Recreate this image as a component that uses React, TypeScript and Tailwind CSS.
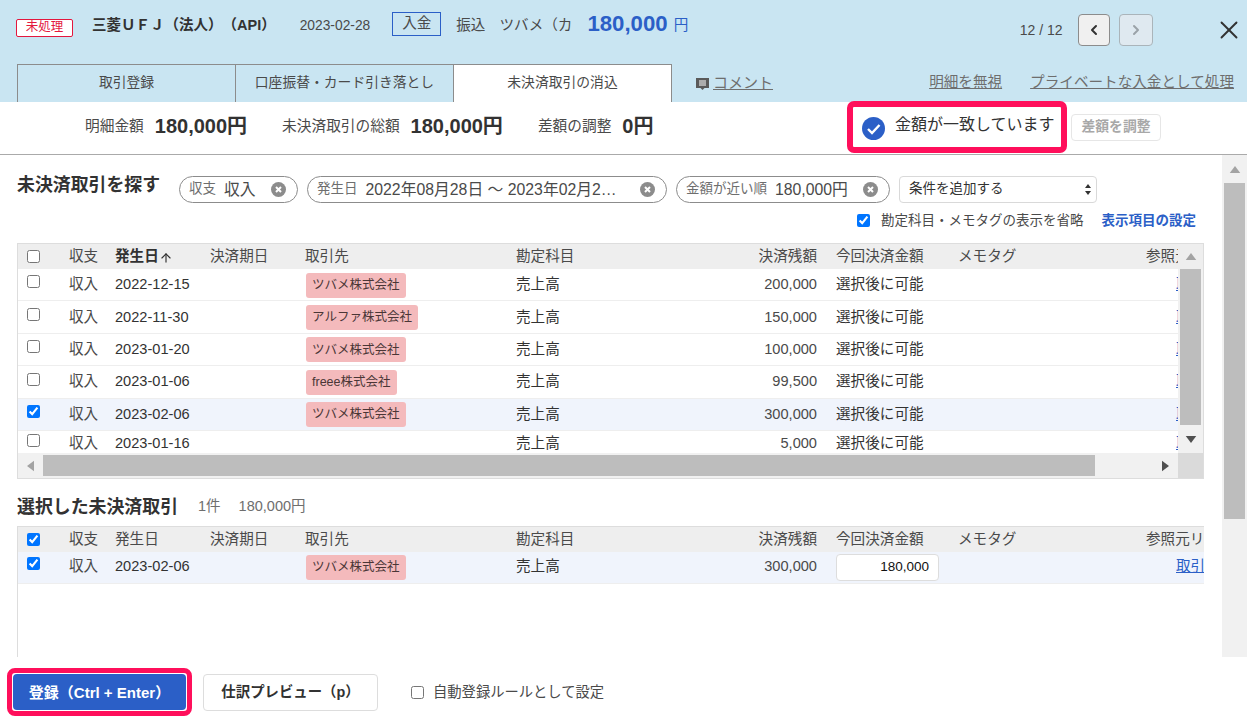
import { ArrowUp, ChevronLeft, ChevronRight, X } from "lucide-react";

const rows = [
  { date: "2022-12-15", partner: "ツバメ株式会社", amount: "200,000" },
  { date: "2022-11-30", partner: "アルファ株式会社", amount: "150,000" },
  { date: "2023-01-20", partner: "ツバメ株式会社", amount: "100,000" },
  { date: "2023-01-06", partner: "freee株式会社", amount: "99,500" },
  { date: "2023-02-06", partner: "ツバメ株式会社", amount: "300,000", checked: true },
  { date: "2023-01-16", partner: "", amount: "5,000", last: true },
];

const gridCols = "grid grid-cols-[51px_46px_95px_95px_211px_150px_170px_122px_188px_1fr] items-center";

const Tag = ({ children }: { children: React.ReactNode }) => (
  <span className="inline-flex h-[25px] items-center rounded-[3px] bg-[#f4babc] px-[6px] text-[12.5px] text-[#4a3636] whitespace-nowrap">
    {children}
  </span>
);

const Tri = ({ dir, className }: { dir: "up" | "down" | "left" | "right"; className: string }) => {
  const points = {
    up: "0,8 6,0 12,8",
    down: "0,0 12,0 6,8",
    left: "8,0 8,12 0,6",
    right: "0,0 0,12 8,6",
  };
  const horizontal = dir === "left" || dir === "right";
  return (
    <svg width={horizontal ? 7 : 12} height={horizontal ? 12 : 7} viewBox={horizontal ? "0 0 8 12" : "0 0 12 8"} className={className}>
      <polygon points={points[dir]} fill="currentColor" />
    </svg>
  );
};

const ClearIcon = () => (
  <svg width="15" height="15" viewBox="0 0 15 15" className="shrink-0">
    <circle cx="7.5" cy="7.5" r="7.5" fill="#8c8c8c" />
    <path d="M5 5l5 5M10 5l-5 5" stroke="#fff" strokeWidth="2" />
  </svg>
);

const Chip = ({ label, value, className }: { label: string; value: string; className: string }) => (
  <div className={`flex h-[27px] items-center rounded-full border border-[#8c8c8c] pl-[9px] pr-[11px] ${className}`}>
    <span className="text-[13.5px] text-[#6e6e6e] whitespace-nowrap">{label}</span>
    <span className="ml-[8px] min-w-0 flex-1 text-[15.8px] text-[#4a4a4a] whitespace-nowrap">{value}</span>
    <ClearIcon />
  </div>
);

const HeaderRow = ({ checked, full }: { checked?: boolean; full?: boolean }) => (
  <div className={`${gridCols} h-[25px] bg-[#eeeeee] text-[14.6px] text-[#4a4a4a]`}>
    <div className="pl-[9px] pt-[3px] leading-none">
      <input type="checkbox" defaultChecked={checked} className="m-0 size-[13px]" />
    </div>
    <div>収支</div>
    <div className="flex items-center">
      {full ? (
        "発生日"
      ) : (
        <>
          <span className="font-bold text-[#323232]">発生日</span>
          <ArrowUp size={14} className="mt-[3px] text-[#323232]" />
        </>
      )}
    </div>
    <div>決済期日</div>
    <div>取引先</div>
    <div>勘定科目</div>
    <div className="pr-[19px] text-right">決済残額</div>
    <div>今回決済金額</div>
    <div>メモタグ</div>
    <div className="overflow-hidden whitespace-nowrap">参照元リンク</div>
  </div>
);

const App = () => {
  return (
    <div className="flex h-[727px] w-[1247px] flex-col overflow-hidden bg-white text-[#323232] [text-spacing-trim:space-all] [font-family:'Liberation_Sans','Noto_Sans_CJK_JP',sans-serif]">
      {/* Header */}
      <div className="h-[102px] shrink-0 bg-[#c9e5f2]">
        <div className="flex h-[64px] items-start">
          <div className="flex h-[48px] flex-1 items-center pl-[16px]">
            <span className="mt-[7px] flex h-[18px] w-[57px] items-center justify-center rounded-[2px] border border-[#e3173e] bg-white text-[12.5px] text-[#e3173e]">未処理</span>
            <span className="ml-[19px] mt-[4px] text-[14.5px] font-bold whitespace-nowrap">三菱ＵＦＪ（法人）（API）</span>
            <span className="ml-[24px] mt-[4px] text-[13.8px] text-[#4a4a4a]">2023-02-28</span>
            <span className="ml-[22px] flex h-[24px] w-[49px] items-center justify-center border border-[#2b5fc7] text-[14.6px] text-[#4a4a4a]">入金</span>
            <span className="ml-[15px] mt-[4px] text-[14.6px] text-[#4a4a4a]">振込</span>
            <span className="ml-[14px] mt-[4px] text-[14.6px] text-[#4a4a4a] whitespace-nowrap">ツバメ（カ</span>
            <span className="ml-[15px] text-[22.2px] font-bold leading-none text-[#2b5fc7]">180,000</span>
            <span className="ml-[6px] mt-[4px] text-[14.6px] text-[#2b5fc7]">円</span>
          </div>
          <div className="flex h-[60px] items-center pr-[3.5px]">
            <span className="text-[14px] text-[#4a4a4a]">12 / 12</span>
            <button className="ml-[15px] flex h-[32px] w-[32px] items-center justify-center rounded-[4px] border border-[#8c8c8c] bg-[#f0f0f0]">
              <ChevronLeft size={16} strokeWidth={3} className="text-[#323232]" />
            </button>
            <button className="ml-[9px] flex h-[32px] w-[34px] items-center justify-center rounded-[4px] border border-[#aab4ba] bg-[#dfe9f0]">
              <ChevronRight size={16} strokeWidth={3} className="text-[#9aa2a8]" />
            </button>
            <X size={30} strokeWidth={1.5} className="ml-[61px] text-[#323232]" />
          </div>
        </div>
        <div className="flex h-[38px] items-end pl-[17px]">
          <div className="flex h-[38px] w-[219px] items-center justify-center border border-b-0 border-[#8c8c8c] text-[13.8px] text-[#4a4a4a]">取引登録</div>
          <div className="flex h-[38px] w-[218px] items-center justify-center border border-b-0 border-l-0 border-[#8c8c8c] text-[13.8px] text-[#4a4a4a] whitespace-nowrap">口座振替・カード引き落とし</div>
          <div className="flex h-[38px] w-[218px] items-center justify-center border border-b-0 border-l-0 border-[#8c8c8c] bg-white text-[13.8px] text-[#4a4a4a]">未決済取引の消込</div>
          <div className="ml-[24px] flex h-[38px] items-center text-[15px] text-[#6e6e6e]">
            <svg width="13" height="12" viewBox="0 0 13 12" className="mr-[4px] mt-[2px]">
              <path d="M0 0h13v10H8.5L6.5 12l-2-2H0z" fill="#5a5a5a" />
              <path d="M3 3h7M3 5h7M3 7h7" stroke="#fff" strokeWidth="1" />
            </svg>
            <span className="underline">コメント</span>
          </div>
          <div className="ml-auto flex h-[38px] items-center pr-[13px] text-[14.6px] text-[#6e6e6e] underline">
            <span>明細を無視</span>
            <span className="ml-[28px]">プライベートな入金として処理</span>
          </div>
        </div>
      </div>

      {/* Summary */}
      <div className="flex h-[53px] shrink-0 items-start border-b border-[#aaaaaa]">
        <div className="flex h-[48px] w-[847px] items-center pl-[85px]">
          <span className="text-[14.7px] text-[#4a4a4a]">明細金額</span>
          <span className="ml-[11px] text-[20px] font-bold">180,000円</span>
          <span className="ml-[35px] text-[14.7px] text-[#4a4a4a]">未決済取引の総額</span>
          <span className="ml-[11px] text-[20px] font-bold">180,000円</span>
          <span className="ml-[35px] text-[14.7px] text-[#4a4a4a]">差額の調整</span>
          <span className="ml-[11px] text-[20px] font-bold">0円</span>
        </div>
        <div className="-mt-px flex h-[52px] w-[220px] items-center rounded-[7px] border-[6px] border-[#ff0f5b] pl-[9px]">
          <svg width="23" height="23" viewBox="0 0 23 23" className="mt-[2px]">
            <circle cx="11.5" cy="11.5" r="11.5" fill="#2b5fc7" />
            <path d="M6 12l4 4 7.5-8" fill="none" stroke="#fff" strokeWidth="2.4" />
          </svg>
          <span className="ml-[10px] -mt-[4px] text-[16px] whitespace-nowrap">金額が一致しています</span>
        </div>
        <button className="ml-[4px] mt-[12px] h-[27px] w-[90px] rounded-[4px] border border-[#e6e6e6] text-[13.8px] font-bold text-[#a8a8a8]">差額を調整</button>
      </div>

      {/* Main */}
      <div className="flex min-h-0 flex-1">
        <div className="min-w-0 flex-1 overflow-hidden pl-[17px] pr-[18px]">
          <div className="flex h-[55px] items-start pt-[21px]">
            <h2 className="w-[162px] text-[17.9px] font-bold leading-[18px] whitespace-nowrap">未決済取引を探す</h2>
            <Chip label="収支" value="収入" className="w-[119px]" />
            <Chip label="発生日" value="2022年08月28日 〜 2023年02月2…" className="ml-[9px] w-[360px]" />
            <Chip label="金額が近い順" value="180,000円" className="ml-[9px] w-[214px]" />
            <div className="ml-[9px] flex h-[27px] w-[198px] items-center justify-between rounded-[4px] border border-[#d9d9d9] pl-[9px] pr-[5px] text-[13.5px]">
              条件を追加する
              <svg width="6" height="11" viewBox="0 0 6 11">
                <path d="M0 4l3-4 3 4zM0 7l3 4 3-4z" fill="#323232" />
              </svg>
            </div>
          </div>
          <div className="mb-[11px] flex h-[22px] items-center justify-end pr-[8px] text-[13.5px]">
            <input type="checkbox" defaultChecked className="m-0 -mt-[2px] size-[13px]" />
            <span className="ml-[11px] text-[#4a4a4a]">勘定科目・メモタグの表示を省略</span>
            <span className="ml-[18px] font-bold text-[#2b5fc7]">表示項目の設定</span>
          </div>

          {/* Search result table */}
          <div className="h-[236px] w-[1187px] border border-[#dddddd]">
            <div className="flex h-[209px]">
              <div className="min-w-0 flex-1 overflow-hidden">
                <HeaderRow />
                {rows.map((row) => (
                  <div key={row.date} className={`${gridCols} pt-px text-[14.6px] ${row.last ? "h-[24px]" : "h-[32.4px] border-b border-[#eeeeee]"} ${row.checked ? "bg-[#f0f4fc]" : "bg-white"}`}>
                    <div className="-mt-[4px] pl-[9px] leading-none">
                      <input type="checkbox" defaultChecked={row.checked} className="m-0 size-[13px]" />
                    </div>
                    <div className="text-[#4a4a4a]">収入</div>
                    <div>{row.date}</div>
                    <div />
                    <div className="pl-px">{row.partner && <Tag>{row.partner}</Tag>}</div>
                    <div>売上高</div>
                    <div className="pr-[19px] text-right text-[#4a4a4a]">{row.amount}</div>
                    <div>選択後に可能</div>
                    <div />
                    <div className="overflow-hidden pl-[30px] whitespace-nowrap text-[#2b5fc7] underline">取引</div>
                  </div>
                ))}
              </div>
              <div className="flex w-[25px] shrink-0 flex-col items-center bg-[#f1f1f1]">
                <div className="flex h-[25px] w-full shrink-0 items-center justify-center bg-[#eeeeee]">
                  <Tri dir="up" className="text-[#a3a3a3]" />
                </div>
                <div className="h-[156px] w-[21px] shrink-0 bg-[#bdbdbd]" />
                <Tri dir="down" className="mt-[11px] text-[#505050]" />
              </div>
            </div>
            <div className="flex h-[25px]">
              <div className="flex min-w-0 flex-1 items-center bg-[#f1f1f1] pl-[9px] pr-[9px]">
                <Tri dir="left" className="text-[#a3a3a3]" />
                <div className="ml-[9px] h-[21px] w-[1052px] bg-[#bdbdbd]" />
                <Tri dir="right" className="ml-auto text-[#505050]" />
              </div>
              <div className="w-[25px] shrink-0 bg-[#dadada]" />
            </div>
          </div>

          {/* Selected */}
          <div className="flex h-[47px] items-center pt-[9px]">
            <h2 className="text-[17.9px] font-bold text-[#323232]">選択した未決済取引</h2>
            <span className="ml-[20px] text-[14.5px] text-[#6e6e6e]">1件</span>
            <span className="ml-[18px] text-[14.5px] text-[#6e6e6e]">180,000円</span>
          </div>
          <div className="h-[140px] w-[1187px] overflow-hidden border border-r-0 border-[#dddddd]">
            <HeaderRow checked full />
            <div className={`${gridCols} h-[31.5px] border-b border-[#eeeeee] bg-[#f0f4fc] text-[14.6px]`}>
              <div className="-mt-[4px] pl-[9px] leading-none">
                <input type="checkbox" defaultChecked className="m-0 size-[13px]" />
              </div>
              <div className="text-[#4a4a4a]">収入</div>
              <div>2023-02-06</div>
              <div />
              <div className="pl-px"><Tag>ツバメ株式会社</Tag></div>
              <div>売上高</div>
              <div className="pr-[19px] text-right text-[#4a4a4a]">300,000</div>
              <div>
                <div className="flex h-[27px] w-[103px] items-center justify-end rounded-[4px] border border-[#dddddd] bg-white pr-[9px] text-[13.5px] text-[#111111]">180,000</div>
              </div>
              <div />
              <div className="overflow-hidden pl-[30px] whitespace-nowrap text-[#2b5fc7] underline">取引先</div>
            </div>
          </div>
        </div>
        {/* Page scrollbar */}
        <div className="flex w-[25px] shrink-0 flex-col items-center bg-[#f1f1f1]">
          <div className="flex h-[28px] w-full shrink-0 items-center justify-center">
            <Tri dir="up" className="text-[#a3a3a3]" />
          </div>
          <div className="h-[336px] w-[21px] bg-[#bdbdbd]" />
        </div>
      </div>

      {/* Footer */}
      <div className="flex h-[70px] shrink-0 items-start pl-[7px] pt-[11px]">
        <div className="rounded-[8px] border-[5px] border-[#ff0f5b] bg-white p-px">
          <button className="block h-[36px] w-[173px] rounded-[4px] bg-[#2b5fc7] pt-[2px] text-[15px] font-bold text-white">登録（Ctrl + Enter）</button>
        </div>
        <button className="ml-[11px] mt-[6px] h-[37px] w-[175px] rounded-[4px] border border-[#dddddd] bg-white pt-px text-[14.4px] font-bold text-[#323232]">仕訳プレビュー（p）</button>
        <label className="ml-[33px] mt-[6px] flex h-[37px] items-center text-[14.3px] text-[#4a4a4a]">
          <input type="checkbox" className="m-0 size-[13px]" />
          <span className="ml-[9px]">自動登録ルールとして設定</span>
        </label>
      </div>
    </div>
  );
};

export default App;
